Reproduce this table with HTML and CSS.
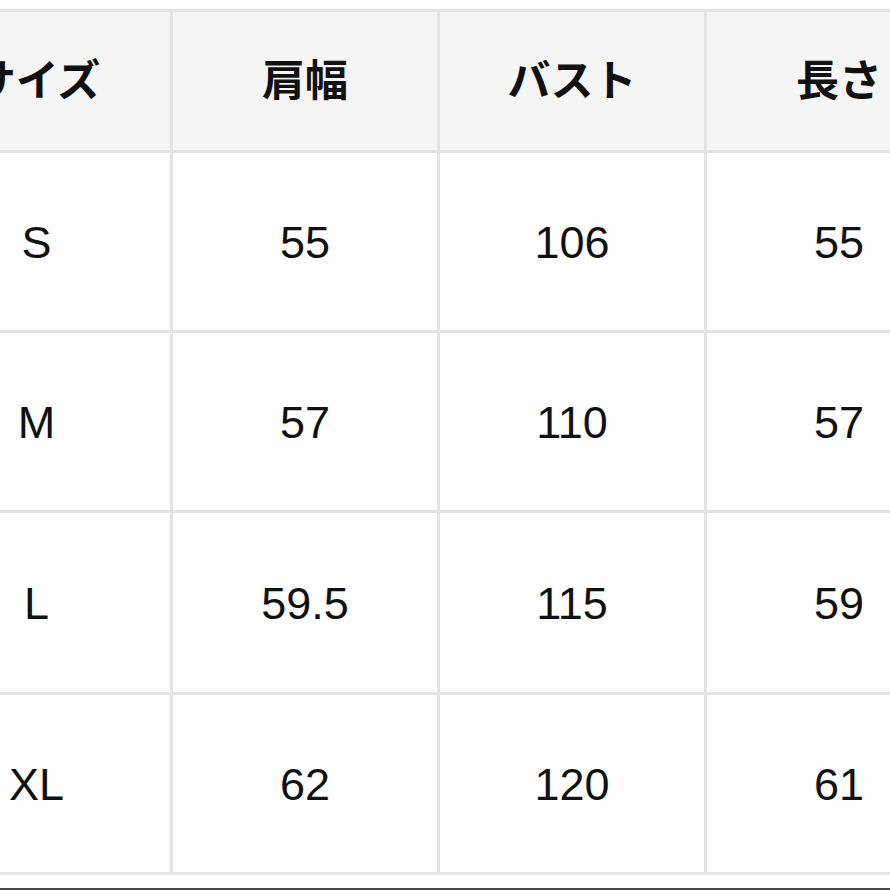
FILE: index.html
```html
<!DOCTYPE html>
<html lang="ja">
<head>
<meta charset="utf-8">
<link rel="stylesheet" href="styles.css">
</head>
<body>
<div class="page">
  <div class="table">
    <div class="cell head">サイズ</div>
    <div class="cell head">肩幅</div>
    <div class="cell head">バスト</div>
    <div class="cell head">長さ</div>

    <div class="cell">S</div>
    <div class="cell">55</div>
    <div class="cell">106</div>
    <div class="cell">55</div>

    <div class="cell">M</div>
    <div class="cell">57</div>
    <div class="cell">110</div>
    <div class="cell">57</div>

    <div class="cell">L</div>
    <div class="cell">59.5</div>
    <div class="cell">115</div>
    <div class="cell">59</div>

    <div class="cell">XL</div>
    <div class="cell">62</div>
    <div class="cell">120</div>
    <div class="cell">61</div>
  </div>
  <div class="bottom-line"></div>
</div>
</body>
</html>
```

FILE: styles.css
```css
html, body {
  margin: 0;
  padding: 0;
  background: #ffffff;
}
body {
  width: 890px;
  height: 890px;
  overflow: hidden;
}
.page {
  padding-top: 9px;
  width: 890px;
  overflow: hidden;
}
.table {
  margin-left: -100px;
  width: 1200px;
  display: grid;
  grid-template-columns: 267px 264px 264px 264px;
  grid-template-rows: 138px 177px 177px 179px 177px;
  gap: 3px;
  padding: 3px;
  background: #e4e4e4;
}
.cell {
  background: #fdfdfd;
  display: flex;
  align-items: center;
  justify-content: center;
  font-family: "Liberation Sans", Arial, sans-serif;
  font-size: 45px;
  color: #111111;
  padding-top: 3px;
}
.head {
  background: #f5f5f5;
  font-family: "Noto Sans CJK JP", "Liberation Sans", sans-serif;
  font-weight: 700;
  font-size: 43px;
  color: #111111;
  padding-top: 0;
  padding-bottom: 8px;
}
.bottom-line {
  margin-top: 13px;
  height: 3px;
  background: #444444;
}
```
